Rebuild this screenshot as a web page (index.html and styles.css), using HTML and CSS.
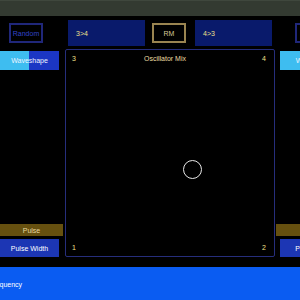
FILE: index.html
```html
<!DOCTYPE html>
<html lang="en">
<head>
    <meta charset="UTF-8">
    <title>Oscillator Mix</title>
    <link rel="stylesheet" href="styles.css">
</head>
<body>
    <div class="titlebar"></div>

    <div class="main">
        <!-- left column -->
        <div class="side left">
            <div class="btn random">Random</div>
            <div class="slider">
                <div class="slider-fill" style="width: 29px;"></div>
                <span>Waveshape</span>
            </div>
            <div class="spacer"></div>
            <div class="tag">Pulse</div>
            <div class="param">Pulse Width</div>
        </div>

        <!-- center: mixer -->
        <div class="center">
            <div class="toprow">
                <div class="route">3&gt;4</div>
                <div class="btn rm">RM</div>
                <div class="route">4&gt;3</div>
            </div>
            <div class="mixpad">
                <div class="pad-row">
                    <span>3</span>
                    <span class="pad-title">Oscillator Mix</span>
                    <span>4</span>
                </div>
                <div class="pad-area">
                    <div class="puck"></div>
                </div>
                <div class="pad-row">
                    <span>1</span>
                    <span>2</span>
                </div>
            </div>
        </div>

        <!-- right column (cut off by the window) -->
        <div class="side right">
            <div class="btn random"></div>
            <div class="slider full">
                <span>Waveshape</span>
            </div>
            <div class="spacer"></div>
            <div class="tag">Square</div>
            <div class="param">Pulse Width</div>
        </div>
    </div>

    <div class="freqbar"><span>Frequency</span></div>
</body>
</html>
```

FILE: styles.css
```css
body {
    margin: 0;
    width: 300px;
    height: 300px;
    overflow: hidden;
    background: #000;
    font-family: "Liberation Sans", Arial, sans-serif;
    font-size: 7px;
    color: #fff;
}

.titlebar {
    height: 15px;
    background: #333a31;
    border-top: 1px solid #3f473d;
}

.main {
    display: flex;
    height: 246px;
}

.side {
    display: flex;
    flex-direction: column;
    flex-shrink: 0;
    width: 63px;
    padding-bottom: 5px;
}

.side.left {
    align-items: flex-start;
}

.side.right {
    width: 72px;
    margin-left: 1px;
    align-items: flex-end;
}

.btn {
    height: 20px;
    box-sizing: border-box;
    display: flex;
    align-items: center;
    justify-content: center;
    margin-top: 7px;
}

.btn.random {
    width: 34px;
    margin-left: 9px;
    border: 2px solid #20277a;
    color: #3244c8;
}

.side.right .btn.random {
    align-self: flex-start;
    margin-left: 19px;
}

.slider {
    position: relative;
    margin-top: 8px;
    width: 59px;
    height: 19px;
    background: #1b36c4;
    display: flex;
    align-items: center;
    justify-content: center;
}

.side.right .slider {
    width: 68px;
}

.slider.full {
    background: #3ebdf0;
}

.slider-fill {
    position: absolute;
    left: 0;
    top: 0;
    bottom: 0;
    background: #3ebdf0;
}

.slider span {
    position: relative;
    color: #eef4ff;
}

.spacer {
    flex: 1;
}

.tag {
    width: 63px;
    height: 12px;
    background: #66500f;
    color: #e8d8a0;
    display: flex;
    align-items: center;
    justify-content: center;
}

.side.right .tag {
    width: 72px;
}

.param {
    margin-top: 3px;
    width: 59px;
    height: 18px;
    background: #1c36b4;
    display: flex;
    align-items: center;
    justify-content: center;
}

.side.right .param {
    width: 68px;
}

.center {
    width: 210px;
    margin-left: 2px;
    flex-shrink: 0;
    display: flex;
    flex-direction: column;
}

.toprow {
    display: flex;
    align-items: center;
    gap: 7px;
    margin-top: 4px;
    padding-left: 3px;
    height: 26px;
}

.route {
    width: 77px;
    height: 26px;
    background: #091a6b;
    color: #f0e08a;
    display: flex;
    align-items: center;
    padding-left: 8px;
    box-sizing: border-box;
}

.btn.rm {
    margin-top: 0;
    width: 34px;
    margin-right: 2px;
    border: 2px solid #9a8450;
    color: #d8c898;
}

.mixpad {
    margin-top: 3px;
    height: 208px;
    box-sizing: border-box;
    border: 1px solid #262e7c;
    border-radius: 2px;
    display: flex;
    flex-direction: column;
    padding: 3px 8px 4px 6px;
}

.pad-row {
    display: flex;
    justify-content: space-between;
    color: #f0e08a;
    height: 10px;
    align-items: center;
}

.pad-title {
    color: #ecdca0;
    margin-right: 8px;
}

.pad-area {
    flex: 1;
    position: relative;
}

.puck {
    position: absolute;
    left: 111px;
    top: 97px;
    width: 17px;
    height: 17px;
    border: 1.5px solid #e8e8e8;
    border-radius: 50%;
}

.freqbar {
    margin-top: 5px;
    height: 34px;
    background: #0a5cf2;
    display: flex;
    align-items: center;
}

.freqbar span {
    margin-left: -11px;
}
```
